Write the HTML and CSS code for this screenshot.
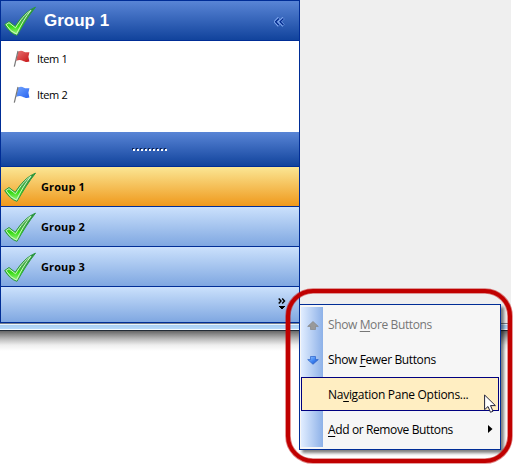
FILE: index.html
```html
<!DOCTYPE html>
<html lang="en">
<head>
<meta charset="utf-8">
<title>Navigation Pane</title>
<link rel="stylesheet" href="styles.css">
</head>
<body>
<svg class="defs" width="0" height="0" aria-hidden="true">
  <defs>
    <linearGradient id="tick" x1="0" y1="0" x2="0" y2="1">
      <stop offset="0" stop-color="#238b35"/><stop offset=".5" stop-color="#42b044"/><stop offset=".68" stop-color="#35dc12"/><stop offset="1" stop-color="#a5f68d"/>
    </linearGradient>
    <linearGradient id="red" x1="0" y1="0" x2="1" y2="1"><stop offset="0" stop-color="#e87575"/><stop offset="1" stop-color="#c71517"/></linearGradient>
    <linearGradient id="blue" x1="0" y1="0" x2="1" y2="1"><stop offset="0" stop-color="#73a5ff"/><stop offset="1" stop-color="#2864f0"/></linearGradient>
    <linearGradient id="arrowBlue" x1="0" y1="0" x2="1" y2="1"><stop offset="0" stop-color="#9fceff"/><stop offset=".5" stop-color="#4388f5"/><stop offset="1" stop-color="#164bc0"/></linearGradient>
    <symbol id="check" viewBox="0 0 34 31">
      <path d="M.7 18.5 L5 15.5 L11.2 20.3 C16.5 12 23 4.5 31.5 1.2 C25 9 19.3 18.5 13 29.3 Q6 27.4 .7 18.5Z" fill="url(#tick)" stroke="#2b9840" stroke-width="1"/>
      <path d="M2 18.6 L5 16.7 L11.5 21.8 C16.5 13.8 21.5 7.7 27 4.3 C21.5 11 17 18.5 12.5 28 Q6.5 26 2 18.6Z" fill="none" stroke="#d0f5c8" stroke-width="1"/>
    </symbol>
    <symbol id="flag" viewBox="0 0 18 18">
      <path d="M5.2 1.5 C7.5 .3 9 .5 11 1.8 C12.5 2.6 14 2.3 16.4 2.2 L15.4 6.8 L16.4 11.5 C13.4 12.5 11.6 11.6 9.6 10.7 C7.7 9.8 5.8 9.8 3.1 10.8Z"/>
      <path d="M5 1 L1.3 16.7" stroke="#777" stroke-width="1.2" fill="none"/>
    </symbol>
  </defs>
</svg>

<main class="window">
  <section class="pane">
    <header class="pane-header">
      <svg class="check"><use href="#check"/></svg>
      <h1>Group 1</h1>
      <svg class="collapse" width="11" height="10" viewBox="0 0 11 10">
        <path d="M5 1 L1.3 4.8 L5 8.6 M9.5 1 L5.8 4.8 L9.5 8.6" fill="none" stroke="#82abf0" stroke-width="3"/>
        <path d="M5 1.4 L1.6 4.8 L5 8.2 M9.5 1.4 L6.1 4.8 L9.5 8.2" fill="none" stroke="#00298c" stroke-width="1.4"/>
      </svg>
    </header>
    <ul class="items">
      <li><svg class="flag" fill="url(#red)"><use href="#flag"/></svg><span>Item 1</span></li>
      <li><svg class="flag" fill="url(#blue)"><use href="#flag"/></svg><span>Item 2</span></li>
    </ul>
    <div class="splitter"><i></i><i></i><i></i><i></i><i></i><i></i><i></i><i></i><i></i></div>
    <div class="group selected"><svg class="check"><use href="#check"/></svg><span>Group 1</span></div>
    <div class="group"><svg class="check"><use href="#check"/></svg><span>Group 2</span></div>
    <div class="group"><svg class="check"><use href="#check"/></svg><span>Group 3</span></div>
    <div class="overflow">
      <svg width="8" height="14" viewBox="0 0 8 14">
        <path d="M.7 .5 L3 3 L.7 5.5 M4.2 .5 L6.5 3 L4.2 5.5" fill="none" stroke="#000" stroke-width="1.4"/>
        <path d="M1 8h6v1H6v1H5v1H3v-1H2v-1H1z"/>
      </svg>
    </div>
  </section>
</main>
<div class="frame"></div>
<div class="frame-shadow"></div>

<nav class="menu">
  <div class="entry disabled">
    <svg width="12" height="9" viewBox="0 0 12 9"><path d="M6 .5 L11.3 5.4 H8.5 V8.5 H3.5 V5.4 H.7Z" fill="#999" stroke="#858585" stroke-width=".7"/></svg>
    <span>Show <u>M</u>ore Buttons</span>
  </div>
  <div class="entry">
    <svg width="12" height="9" viewBox="0 0 12 9"><path d="M6 8.3 L11.3 3.6 H8.5 V.5 H3.5 V3.6 H.7Z" fill="url(#arrowBlue)" stroke="#2860c8" stroke-width=".7"/></svg>
    <span>Show <u>F</u>ewer Buttons</span>
  </div>
  <div class="entry active"><span>Na<u>v</u>igation Pane Options...</span></div>
  <div class="entry"><span><u>A</u>dd or Remove Buttons</span>
    <svg class="submenu" width="5" height="8" viewBox="0 0 5 8"><path d="M0 0 L4.5 4 L0 8Z"/></svg>
  </div>
</nav>

<svg class="callout" width="230" height="178" viewBox="0 0 230 178">
  <rect x="4" y="4" width="222" height="170" rx="25" fill="none" stroke="#c00000" stroke-opacity=".5" stroke-width="5.6"/>
  <rect x="4" y="4" width="222" height="170" rx="25" fill="none" stroke="#c00000" stroke-width="4"/>
</svg>
<svg class="cursor" width="13" height="20" viewBox="0 0 13 20">
  <path d="M.6 1 V15.7 L4 12.5 L6.5 18.3 L9 17.2 L6.5 11.6 H11.4Z" fill="#fff" stroke="#222238" stroke-width="1"/>
</svg>
</body>
</html>
```
FILE: styles.css
```css
* { box-sizing: border-box; }
body {
  margin: 0;
  width: 524px;
  height: 472px;
  overflow: hidden;
  position: relative;
  background: #fff;
  color: #000;
  font-family: "Open Sans", sans-serif;
}
svg { display: block; flex: none; }
.defs { position: absolute; }
.window { width: 511px; height: 323px; background: #efefef; }
.pane {
  width: 300px;
  height: 323px;
  display: flex;
  flex-direction: column;
  border: 1px solid #002d96;
  background: #fff;
}
.pane-header {
  height: 40px;
  display: flex;
  align-items: center;
  padding: 0 14px 0 3px;
  border-bottom: 1px solid #002d96;
  background: linear-gradient(#5985d6, #11439c);
}
.check { width: 34px; height: 31px; }
.pane-header .check { margin-top: 2px; }
h1 {
  flex: 1;
  margin: 0 0 0 6px;
  color: #fff;
  font: bold 17px/20px "Liberation Sans", sans-serif;
}
.collapse { margin-top: 3px; }
.items {
  height: 91px;
  margin: 0;
  padding: 0 0 0 12px;
  list-style: none;
}
.items li { height: 36px; display: flex; align-items: center; }
.flag { width: 18px; height: 18px; margin-top: -1px; }
.items span { margin: -2px 0 0 6px; font-size: 11px; letter-spacing: -.35px; }
.splitter {
  height: 35px;
  display: flex;
  justify-content: center;
  align-items: center;
  gap: 1px;
  padding: 1px 2px 0 0;
  border-bottom: 1px solid #002d96;
  background: linear-gradient(#5985d6, #11439c);
}
.splitter i {
  width: 3px;
  height: 3px;
  background: linear-gradient(#fff, #fff) 1px 1px / 2px 2px no-repeat, linear-gradient(#10285a, #10285a) 0 0 / 2px 2px no-repeat;
}
.group {
  height: 40px;
  display: flex;
  align-items: center;
  padding-left: 3px;
  border-bottom: 1px solid #002d96;
  background: linear-gradient(#cbe1fc, #7fa7e1);
}
.group.selected { background: linear-gradient(#fbe694, #ef991c); }
.group .check { margin-top: 2px; }
.group span { margin-left: 3px; font-size: 11px; font-weight: bold; letter-spacing: .1px; }
.overflow {
  height: 35px;
  display: flex;
  justify-content: flex-end;
  padding: 11px 13px 0 0;
  background: linear-gradient(#cbe1fc, #7fa7e1);
}
.frame {
  width: 511px;
  height: 8px;
  border: solid #777f8b;
  border-width: 1px 0;
  border-bottom-color: #222b35;
  background: linear-gradient(#e9f5ff 1px, #a7cdf1 1px, #b8dafa 5px, #f4faff 5px);
}
.frame-shadow {
  width: 511px;
  height: 20px;
  background: linear-gradient(#666, #888 3px, #bbb 8px, #eee 14px, #fff);
}
.menu {
  position: absolute;
  left: 299px;
  top: 304px;
  width: 202px;
  height: 146px;
  padding: 2px 1px 3px;
  border: 1px solid #002d96;
  background: linear-gradient(90deg, #e1edff, #8db1e8) 1px 2px / 22px 140px no-repeat, #f6f6f6;
  box-shadow: 3px 3px 3px rgba(0, 0, 0, .5);
}
.entry {
  height: 35px;
  display: flex;
  align-items: center;
  position: relative;
  padding-left: 27px;
  font-size: 12px;
  letter-spacing: -.38px;
  white-space: nowrap;
}
.entry u { text-underline-offset: 2px; }
.entry > svg:first-child { margin: 1px 9px 0 -21px; }
.disabled { color: #777; }
.entry.active { height: 34px; margin: 0 0 1px; border: 1px solid #000080; background: #ffeec2; padding-left: 26px; letter-spacing: -.28px; }
.submenu { margin: -1px 6px 0 auto; }
.callout { position: absolute; left: 284px; top: 287px; }
.cursor { position: absolute; left: 484px; top: 394px; }
```
